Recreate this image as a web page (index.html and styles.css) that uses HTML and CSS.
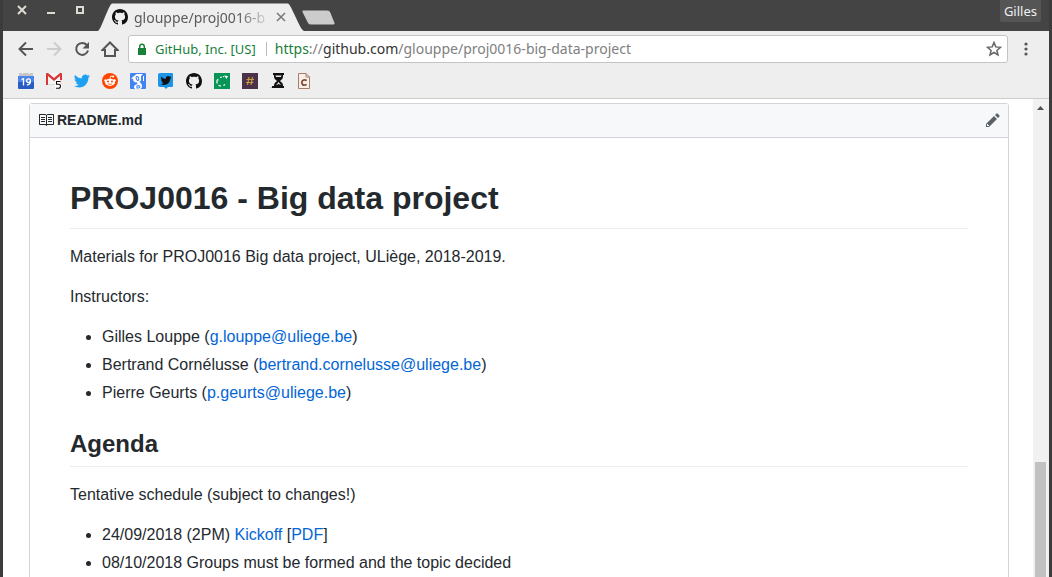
FILE: index.html
```html
<!DOCTYPE html>
<html lang="en">
<head>
<meta charset="utf-8">
<title>glouppe/proj0016-big-data-project</title>
<link rel="stylesheet" href="styles.css">
</head>
<body>
<svg class="defs" aria-hidden="true">
  <symbol id="octocat" viewBox="0 0 16 16"><path d="M8 0C3.58 0 0 3.58 0 8c0 3.54 2.29 6.53 5.47 7.59.4.07.55-.17.55-.38 0-.19-.01-.82-.01-1.49-2.01.37-2.53-.49-2.69-.94-.09-.23-.48-.94-.82-1.13-.28-.15-.68-.52-.01-.53.63-.01 1.08.58 1.23.82.72 1.21 1.87.87 2.33.66.07-.52.28-.87.51-1.07-1.78-.2-3.64-.89-3.64-3.95 0-.87.31-1.59.82-2.15-.08-.2-.36-1.02.08-2.12 0 0 .67-.21 2.2.82.64-.18 1.32-.27 2-.27s1.36.09 2 .27c1.53-1.04 2.2-.82 2.2-.82.44 1.1.16 1.92.08 2.12.51.56.82 1.27.82 2.15 0 3.07-1.87 3.75-3.65 3.95.29.25.54.73.54 1.48 0 1.07-.01 1.93-.01 2.2 0 .21.15.46.55.38A8.01 8.01 0 0 0 16 8c0-4.42-3.58-8-8-8z"/></symbol>
  <symbol id="bird" viewBox="0 0 24 24"><path d="M23.95 4.57a10 10 0 0 1-2.82.77 4.96 4.96 0 0 0 2.16-2.72c-.95.55-2 .96-3.13 1.18a4.92 4.92 0 0 0-8.38 4.48C7.69 8.1 4.07 6.13 1.64 3.16a4.92 4.92 0 0 0 1.52 6.57 4.9 4.9 0 0 1-2.23-.61v.06a4.92 4.92 0 0 0 3.95 4.83 5 5 0 0 1-2.21.08 4.94 4.94 0 0 0 4.6 3.42A9.87 9.87 0 0 1 0 19.54a13.99 13.99 0 0 0 7.55 2.21c9.05 0 14-7.5 14-13.98 0-.21 0-.42-.02-.63a9.94 9.94 0 0 0 2.46-2.55z"/></symbol>
</svg>
<div class="window">
  <header class="titlebar">
    <div class="controls">
      <button aria-label="Close window"><svg width="10" height="10" viewBox="0 0 10 10"><path d="M1 1l8 8M9 1l-8 8"/></svg></button>
      <button aria-label="Minimize"><svg width="10" height="10" viewBox="0 0 10 10"><path d="M1 8h8"/></svg></button>
      <button aria-label="Maximize"><svg width="10" height="10" viewBox="0 0 10 10"><path d="M2 2h6v6H2z"/></svg></button>
    </div>
    <div class="tab">
      <svg class="tab-shape" viewBox="0 0 206 29" preserveAspectRatio="none"><path d="M0 29C3 28 11 1 14 .5h176C193 1 202 28 206 29z"/></svg>
      <svg class="tab-icon" width="16" height="16"><use href="#octocat"/></svg>
      <span class="tab-title">glouppe/proj0016-b</span>
      <button class="tab-close" aria-label="Close tab"><svg width="10" height="10" viewBox="0 0 10 10"><path d="M1 1l8 8M9 1l-8 8"/></svg></button>
    </div>
    <button class="new-tab" aria-label="New tab"><svg width="34" height="17" viewBox="0 0 34 17"><path d="M2 1h24c2 0 3 1 4 3l4 10c0 1 0 2-2 2H10c-2 0-3-1-4-3L1 3c0-1 0-2 1-2z"/></svg></button>
    <button class="profile">Gilles</button>
  </header>

  <div class="toolbar">
    <nav class="nav" aria-label="Navigation">
      <button aria-label="Back"><svg width="16" height="16" viewBox="0 0 16 16"><path d="M15 8H2M8 1.500L1.500 8 8 14.500"/></svg></button>
      <button class="disabled" aria-label="Forward" disabled><svg width="16" height="16" viewBox="0 0 16 16"><path d="M1 8h13M8 1.500L14.500 8 8 14.500"/></svg></button>
      <button aria-label="Reload"><svg width="16" height="16" viewBox="0 0 16 16"><path d="M12.800 4A6 6 0 1 0 14 9.500"/><path class="solid" d="M15 1v6.500H8.500z"/></svg></button>
      <button aria-label="Home"><svg width="18" height="16" viewBox="0 0 18 16"><path d="M1.500 9L9 1.500 16.500 9H14v6H4V9z"/></svg></button>
    </nav>
    <div class="omnibox">
      <svg class="lock" width="8" height="12" viewBox="0 0 8 12"><path d="M0 5h8v7H0z"/><path class="shackle" d="M1.700 5V3.500a2.300 2.300 0 0 1 4.600 0V5"/></svg>
      <span class="identity">GitHub, Inc. [US]</span>
      <div class="url" role="textbox" contenteditable="true" spellcheck="false" aria-label="Address"><span class="secure">https</span><span class="dim">://</span>github.com<span class="dim">/glouppe/proj0016-big-data-project</span></div>
      <button class="star" aria-label="Bookmark this page"><svg width="16" height="16" viewBox="0 0 16 16"><path d="M8 1.500l1.800 4.400 4.700.4-3.600 3.100 1.100 4.600L8 11.500 4 14l1.100-4.600-3.600-3.100 4.700-.4z"/></svg></button>
    </div>
    <button class="menu" aria-label="Menu"><svg width="4" height="14" viewBox="0 0 4 14"><circle cx="2" cy="2" r="1.600"/><circle cx="2" cy="7" r="1.600"/><circle cx="2" cy="12" r="1.600"/></svg></button>
  </div>

  <nav class="bookmarks" aria-label="Bookmarks">
    <a href="#" aria-label="Calendar"><svg viewBox="0 0 16 16"><path fill="#c6c6c6" d="M1 0h14v4H1z"/><path fill="#eee" d="M4 0h1v1H4zM11 0h1v1h-1z"/><path fill="#4a83ea" d="M0 3h16v6H0z"/><path fill="#2b5cc4" d="M0 9h16v6q0 1-1 1H1q-1 0-1-1z"/><path class="digits" d="M3.500 6.700L5.500 5.700V12.500"/><circle class="digits" cx="10.500" cy="7.700" r="1.900"/><path class="digits" d="M12.400 7.700q.3 4.200-3.600 4.200"/></svg></a>
    <a href="#" aria-label="Mail, 5 unread"><svg viewBox="0 0 16 16"><path fill="#f4f4f4" d="M0 0h16v12H0z"/><path fill="#d9363a" d="M0 1q0-1 1-1h1l6 5 6-5h1q1 0 1 1v11h-2V3L8 8 2 3v9H0z"/><path fill="#ddd" d="M2 11h7v1H2z"/><path fill="#fff" opacity=".85" d="M9 7h7v9H9z"/><path fill="none" stroke="#111" stroke-width="1.100" d="M14.500 8.500h-4v2.700h2q2 0 2 2t-2 2h-2.500"/></svg></a>
    <a href="#" aria-label="Twitter"><svg viewBox="0 0 16 16" fill="#1da1f2"><use href="#bird"/></svg></a>
    <a href="#" aria-label="Reddit"><svg viewBox="0 0 16 16"><circle cx="8" cy="8" r="8" fill="#ff4500"/><g fill="#fff"><ellipse cx="8" cy="9.300" rx="5" ry="3.600"/><circle cx="3.600" cy="7.600" r="1.300"/><circle cx="12.400" cy="7.600" r="1.300"/><circle cx="11.200" cy="3.600" r="1"/></g><path fill="none" stroke="#fff" stroke-width=".8" d="M8 6l.7-3 2.500.6"/><g fill="#ff4500"><circle cx="6" cy="8.500" r="1"/><circle cx="10" cy="8.500" r="1"/></g><path fill="none" stroke="#ff4500" stroke-width=".8" d="M5.800 10.800q2.200 1.300 4.400 0"/></svg></a>
    <a href="#" aria-label="Scholar"><svg viewBox="0 0 16 16"><rect width="16" height="16" rx="1" fill="#4284f4"/><path fill="#fff" d="M1 5.500L6.500 1H13l-2 2v4q0 1-1.500 2l2 2q1.500 3-1 5H5q-2-2 0-4l2.500-1-.5-1.500Q3 9.500 3 6zM13 3h1v5h-1z"/><path fill="none" stroke="#4284f4" stroke-width="1.100" d="M6 3.800q2-.8 2.600 1.200t-.6 2.500T6 3.800M7 13q2.500-1 2.800.7T7 15z"/></svg></a>
    <a href="#" aria-label="Tweet feed"><svg viewBox="0 0 16 16"><path fill="#1b95e8" d="M2 0h12q1 0 1 1v12q0 1-1 1h-4l-2 2-2-2H2q-2 0-2-2V2q0-2 2-2z"/><use href="#bird" x="2.500" y="2" width="11" height="11" fill="#111"/></svg></a>
    <a href="#" aria-label="GitHub"><svg viewBox="0 0 16 16" fill="#111"><use href="#octocat"/></svg></a>
    <a href="#" aria-label="Sync"><svg viewBox="0 0 16 16"><path fill="#079457" d="M0 0h16v16H0z"/><g fill="none" stroke="#fff" stroke-width="1.200"><path d="M6 4.500l4-1" stroke-dasharray="2 1"/><path d="M3 7.500v3M4.500 12.300l2.500 1M9.500 12.500l1.500-1"/></g><path fill="#fff" d="M10 2.500l4 .5-1.500 3zM2 7.500l2-2 .7 2z"/></svg></a>
    <a href="#" aria-label="Channel"><svg viewBox="0 0 16 16"><path fill="#4b3149" d="M0 0h16v16H0z"/><path fill="none" stroke="#c99c3e" stroke-width="1.200" d="M7 4L5.500 12M10.500 4L9 12M4.500 6.500h7.500M4 9.500h7.500"/></svg></a>
    <a href="#" aria-label="Timer"><svg viewBox="0 0 16 16"><path fill="#111" d="M3 0h11v2h-1v2q0 2-3 4 3 2 3 4v1h1v2H2v-2h2v-1q0-2 3-4-3-2-3-4V2H3z"/><path fill="#eee" d="M5.500 2.500h6L11 4H6zM8.500 9l2.500 3-2.500-1L6 12.500z"/><path fill="#ccc" d="M0 14h2v1H0z"/></svg></a>
    <a href="#" class="narrow" aria-label="Document C"><svg viewBox="0 0 12 16"><path fill="#f8efe9" stroke="#a97a66" d="M.5.5H8L11.500 4v11.500H.5z"/><path fill="none" stroke="#a97a66" d="M8 .5V4h3.500"/><path fill="none" stroke="#7e4a35" stroke-width="1.700" d="M8.700 7.500q-3-1.500-4.500.5-1 2 .3 3.500 1.500 1.300 4.200 0"/></svg></a>
  </nav>

  <div class="viewport">
    <main class="page">
      <section class="readme">
        <h3 class="readme-head">
          <svg width="16" height="16" viewBox="0 0 16 16"><path d="M3 5h4v1H3V5zm0 3h4V7H3v1zm0 2h4V9H3v1zm11-5h-4v1h4V5zm0 2h-4v1h4V7zm0 2h-4v1h4V9zm2-6v9c0 .55-.45 1-1 1H9.500l-1 1-1-1H2c-.55 0-1-.45-1-1V3c0-.55.45-1 1-1h5.500l1 1 1-1H15c.55 0 1 .45 1 1zm-8 .5L7.500 3H2v9h6V3.500zm7-.5H9.500l-.5.5V12h6V3z"/></svg>
          <span>README.md</span>
          <button aria-label="Edit this file"><svg width="14" height="16" viewBox="0 0 14 16"><path d="M0 12v3h3l8-8-3-3-8 8zm3 2H1v-2h1v1h1v1zm10.300-9.300L12 6 9 3l1.300-1.300a1 1 0 0 1 1.400 0l1.600 1.600a1 1 0 0 1 0 1.400z"/></svg></button>
        </h3>
        <article class="markdown">
          <h1>PROJ0016 - Big data project</h1>
          <p>Materials for PROJ0016 Big data project, ULiège, 2018-2019.</p>
          <p>Instructors:</p>
          <ul>
            <li>Gilles Louppe (<a href="mailto:g.louppe@uliege.be">g.louppe@uliege.be</a>)</li>
            <li>Bertrand Cornélusse (<a href="mailto:bertrand.cornelusse@uliege.be">bertrand.cornelusse@uliege.be</a>)</li>
            <li>Pierre Geurts (<a href="mailto:p.geurts@uliege.be">p.geurts@uliege.be</a>)</li>
          </ul>
          <h2>Agenda</h2>
          <p>Tentative schedule (subject to changes!)</p>
          <ul>
            <li>24/09/2018 (2PM) <a href="#">Kickoff</a> [<a href="#">PDF</a>]</li>
            <li>08/10/2018 Groups must be formed and the topic decided</li>
          </ul>
        </article>
      </section>
    </main>
    <div class="scrollbar" aria-hidden="true">
      <svg width="7" height="4" viewBox="0 0 7 4"><path d="M0 4l3.500-4L7 4z"/></svg>
      <div class="thumb"></div>
    </div>
  </div>
</div>
</body>
</html>
```
FILE: styles.css
```css
* { box-sizing: border-box; }

body {
  margin: 0;
  background: #3c3c3c;
  font-family: "Liberation Sans", Arial, sans-serif;
  color: #24292e;
}

button {
  display: flex;
  align-items: center;
  justify-content: center;
  margin: 0;
  padding: 0;
  border: 0;
  background: none;
  color: inherit;
  font: inherit;
}

.defs { position: absolute; width: 0; height: 0; }

.window {
  display: flex;
  flex-direction: column;
  height: 100vh;
  overflow: hidden;
  border: solid #3c3c3c;
  border-width: 0 3px;
}

/* Title bar */
.titlebar {
  display: flex;
  flex: none;
  height: 31px;
  background: #444;
  font-family: "Noto Sans", sans-serif;
}

.controls {
  display: flex;
  gap: 19px;
  width: 95px;
  padding: 5px 0 0 14px;
}

.controls button { width: 10px; height: 10px; }
.controls path { fill: none; stroke: #dfdbd2; stroke-width: 2; }

.tab {
  position: relative;
  display: flex;
  align-items: center;
  width: 206px;
  height: 28px;
  margin-top: 3px;
  padding: 0 18px 0 14px;
}

.tab-shape {
  position: absolute;
  inset: 0;
  width: 100%;
  height: 100%;
  fill: #eee;
}

.tab-icon, .tab-title, .tab-close { position: relative; }
.tab-icon { flex: none; fill: #111; }

.tab-title {
  flex: 1;
  margin: 0 4px 0 6px;
  white-space: nowrap;
  font-size: 14px;
  color: #5a5a5a;
  -webkit-mask-image: linear-gradient(to right, #000 75%, transparent);
  mask-image: linear-gradient(to right, #000 75%, transparent);
}

.tab-close path { fill: none; stroke: #777; stroke-width: 1.500; }

.new-tab { height: 17px; margin: 9px 0 0 -3px; }
.new-tab path { fill: #ccc; stroke: #444; }

.profile {
  height: 22px;
  margin: 0 8px 0 auto;
  padding: 0 4px;
  border-radius: 0 0 2px 2px;
  background: #555;
  color: #eee;
  font-size: 13px;
}

/* Toolbar */
.toolbar {
  display: flex;
  flex: none;
  align-items: center;
  height: 36px;
  padding-right: 21px;
  background: #eee;
}

.nav {
  display: flex;
  width: 125px;
  padding-left: 9px;
}

.nav button { width: 28px; height: 28px; }
.nav path { fill: none; stroke: #555; stroke-width: 2; }
.nav .solid { fill: #555; stroke: none; }
.nav .disabled path { stroke: #ccc; }

.omnibox {
  display: flex;
  flex: 1;
  align-items: center;
  height: 28px;
  margin-right: 16px;
  padding: 0 5px 0 9px;
  border: 1px solid #c4c4c4;
  border-radius: 3px;
  background: #fff;
  font: 14px/20px "Noto Sans", sans-serif;
}

.lock { margin-right: 9px; fill: #188038; }
.lock .shackle { fill: none; stroke: #188038; stroke-width: 1.400; }

.identity {
  padding-right: 10px;
  color: #188038;
  font-size: 13px;
}

.url {
  flex: 1;
  padding-left: 9px;
  background: linear-gradient(#bbb, #bbb) left center / 1px 14px no-repeat;
  outline: none;
  white-space: nowrap;
  color: #333;
}

.secure { color: #188038; }
.dim { color: #808080; }
.star path { fill: none; stroke: #666; stroke-width: 1.500; }
.menu { width: 4px; height: 28px; }
.menu svg { fill: #555; }

/* Bookmarks */
.bookmarks {
  display: flex;
  flex: none;
  gap: 12px;
  height: 32px;
  padding: 6px 15px;
  border-bottom: 1px solid #ccc;
  background: #eee;
}

.bookmarks a { width: 16px; height: 16px; }
.bookmarks .narrow { width: 12px; }
.bookmarks svg { display: block; width: 100%; height: 100%; }
.digits { fill: none; stroke: #fff; stroke-width: 1.300; }

/* Page */
.viewport {
  display: flex;
  flex: 1;
  min-height: 0;
  background: #fff;
}

.page {
  flex: 1;
  padding: 4px 24px 0 26px;
  overflow: hidden;
}

.readme {
  max-width: 980px;
  margin: 0 auto;
  border: 1px solid #d1d5da;
  border-radius: 3px;
}

.readme-head {
  display: flex;
  align-items: center;
  gap: 3px;
  margin: 0;
  padding: 6px 8px 7px;
  border-bottom: 1px solid #d1d5da;
  background: #f6f8fa;
  font-size: 14px;
  line-height: 20px;
}

.readme-head svg { fill: #24292e; }
.readme-head button { margin-left: auto; }
.readme-head button svg { fill: #586069; }

.markdown {
  padding: 40px 40px 80px;
  font-size: 16px;
  line-height: 24px;
}

.markdown h1, .markdown h2 {
  margin: 24px 0 16px;
  border-bottom: 1px solid #eaecef;
}

.markdown h1 {
  margin-top: 0;
  padding-bottom: 10px;
  font-size: 32px;
  line-height: 40px;
}

.markdown h2 {
  padding-bottom: 7px;
  font-size: 24px;
  line-height: 30px;
}

.markdown p, .markdown ul { margin: 0 0 16px; }
.markdown ul { padding-left: 32px; }
.markdown li + li { margin-top: 4px; }
.markdown a { color: #0366d6; text-decoration: none; }

.scrollbar {
  display: flex;
  flex-direction: column;
  align-items: center;
  width: 16px;
  padding: 7px 1px 0 0;
  background: #f1f1f1;
}

.scrollbar svg { flex: none; fill: #505050; }

.thumb {
  width: 11px;
  height: 115px;
  margin-top: auto;
  background: #c1c1c1;
}
```
